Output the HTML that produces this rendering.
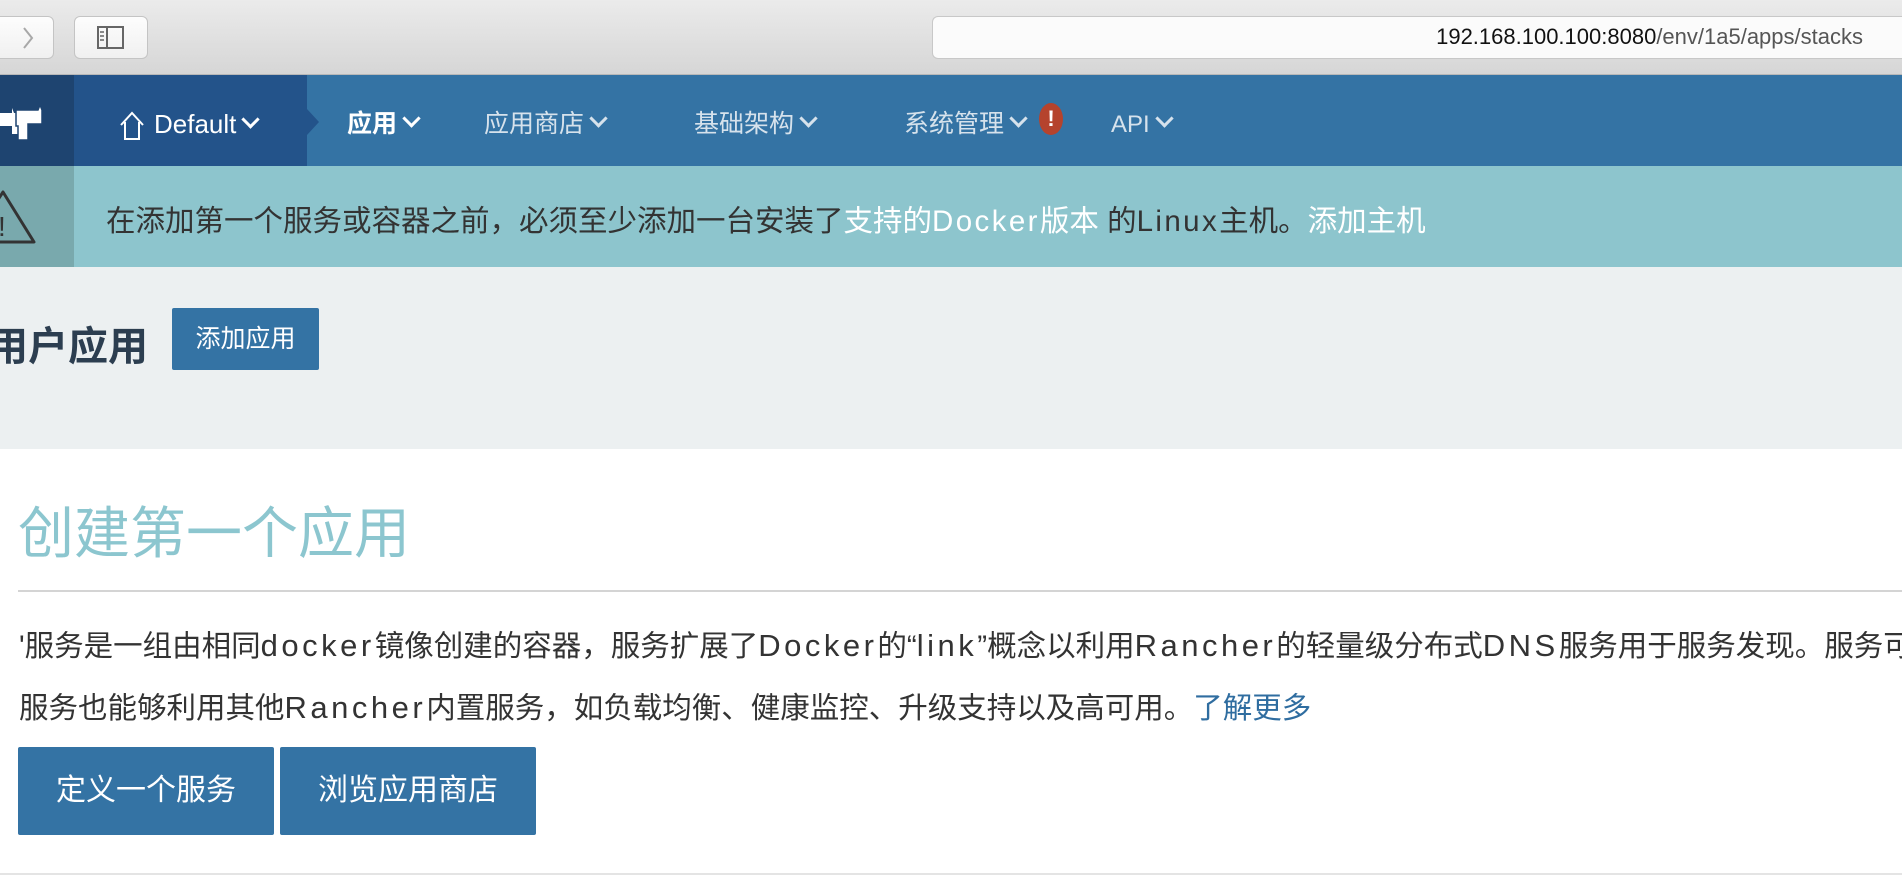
<!DOCTYPE html>
<html><head><meta charset="utf-8"><style>
*{margin:0;padding:0;box-sizing:border-box}
body{width:1902px;height:876px;overflow:hidden;background:#fff;font-family:"Liberation Sans","Noto Sans CJK SC",sans-serif;position:relative}
.abs{position:absolute}
#chrome{left:0;top:0;width:1902px;height:75px;background:linear-gradient(#ebebeb,#d6d6d6);border-bottom:1px solid #b8b8b8}
.btn{background:linear-gradient(#fdfdfd,#f0f0f0);border:1px solid #c4c4c4;border-radius:6px}
#nav{left:0;top:75px;width:1902px;height:91px;background:#3473a4}
.ni{top:79px;height:91px;line-height:91px;color:#d6e2ec;font-size:25px;white-space:nowrap}
.chev{display:inline-block;width:13px;height:13px;border-right:3px solid currentColor;border-bottom:3px solid currentColor;transform:rotate(45deg);margin-left:8px;position:relative;top:-7px}
#banner{left:0;top:166px;width:1902px;height:101px;background:#8dc5cd}
#gray{left:0;top:267px;width:1902px;height:182px;background:#ecf0f1}
.pb{background:#3473a4;color:#fff;text-align:center;border-radius:2px}
.l{letter-spacing:2.4px}
.p{font-size:29.5px;color:#333;white-space:nowrap}
.m{font-size:31px;letter-spacing:3.5px}
#clip{left:0;top:600px;width:1902px;height:140px;overflow:hidden}
</style></head><body>
<div id="chrome" class="abs">
 <div class="abs btn" style="left:-8px;top:16px;width:62px;height:43px"></div>
 <svg class="abs" style="left:21px;top:26px" width="14" height="24"><path d="M3 2 L11 12 L3 22" stroke="#a8a8a8" stroke-width="2" fill="none"/></svg>
 <div class="abs btn" style="left:74px;top:16px;width:74px;height:43px"></div>
 <svg class="abs" style="left:97px;top:26px" width="28" height="24"><rect x="1" y="1" width="25" height="21" fill="none" stroke="#666" stroke-width="2"/><line x1="10" y1="1" x2="10" y2="22" stroke="#666" stroke-width="2"/><line x1="3" y1="6" x2="7" y2="6" stroke="#666" stroke-width="1.5"/><line x1="3" y1="10" x2="7" y2="10" stroke="#666" stroke-width="1.5"/><line x1="3" y1="14" x2="7" y2="14" stroke="#666" stroke-width="1.5"/></svg>
 <div class="abs" style="left:932px;top:16px;width:970px;height:43px;background:#fbfbfb;border:1px solid #c8c8c8;border-right:none;border-radius:6px 0 0 6px"></div>
 <div class="abs" style="right:39px;top:24px;font-size:22px;color:#111;white-space:nowrap">192.168.100.100:8080<span style="color:#555">/env/1a5/apps/stacks</span></div>
</div>
<div id="nav" class="abs"></div>
<div class="abs" style="left:0;top:75px;width:74px;height:91px;background:#1e4470"></div>
<svg class="abs" style="left:0;top:104px" width="46" height="38"><path d="M0 9 H12 V4 L14 9 H20 V30 H12 V22 H0 Z" fill="#fff"/><path d="M16 6 H38 L40 1 L42 6 V20 H28 V36 H18 V22 H16 Z" fill="#fff" stroke="#1e4470" stroke-width="1.5"/></svg>
<div class="abs" style="left:74px;top:75px;width:233px;height:91px;background:#23538a"></div>
<svg class="abs" style="left:307px;top:109px" width="12" height="26"><path d="M0 0 L12 13 L0 26 Z" fill="#23538a"/></svg>
<svg class="abs" style="left:119px;top:111px" width="26" height="30"><path d="M2 14 L13 2 L24 14 M6 11 V28 H20 V11" stroke="#fff" stroke-width="2" fill="none"/></svg>
<div class="abs ni" style="left:154px;color:#fff;font-size:26px">Default<span class="chev"></span></div>
<div class="abs ni" style="left:347px;color:#fff;font-weight:bold">应用<span class="chev"></span></div>
<div class="abs ni" style="left:484px">应用商店<span class="chev"></span></div>
<div class="abs ni" style="left:694px">基础架构<span class="chev"></span></div>
<div class="abs ni" style="left:904px">系统管理<span class="chev"></span></div>
<div class="abs" style="left:1039px;top:103px;width:24px;height:32px;border-radius:50%;background:#b5432d;color:#fff;font-size:22px;line-height:32px;text-align:center;font-weight:bold">!</div>
<div class="abs ni" style="left:1111px;font-size:24px">API<span class="chev"></span></div>
<div id="banner" class="abs"></div>
<div class="abs" style="left:0;top:166px;width:74px;height:101px;background:#79a9ad"></div>
<svg class="abs" style="left:0;top:186px" width="40" height="64"><path d="M3 6 L34 56 H-30 Z" fill="none" stroke="#333" stroke-width="3" stroke-linejoin="round"/><text x="-2" y="50" font-size="28" fill="#333" font-family="Liberation Sans">!</text></svg>
<div class="abs" style="left:106px;top:198px;font-size:29.5px;color:#333;white-space:nowrap">在添加第一个服务或容器之前，必须至少添加一台安装了<span style="color:#fff">支持的<span class="l">Docker</span>版本</span> 的<span class="l">Linux</span>主机。<span style="color:#fff">添加主机</span></div>
<div id="gray" class="abs"></div>
<div class="abs" style="left:-12px;top:314px;font-size:40px;font-weight:bold;color:#2c3e50;white-space:nowrap">用户应用</div>
<div class="abs pb" style="left:172px;top:308px;width:147px;height:62px;line-height:62px;font-size:25px">添加应用</div>
<div class="abs" style="left:18px;top:489px;font-size:56px;color:#8cc6cf;white-space:nowrap">创建第一个应用</div>
<div class="abs" style="left:18px;top:590px;width:1884px;height:2px;background:#d4d4d4"></div>
<div id="clip" class="abs">
<div class="abs p" style="left:19px;top:23px">'服务是一组由相同<span class="m">docker</span>镜像创建的容器，服务扩展了<span class="m">Docker</span>的“<span class="m">link</span>”概念以利用<span class="m">Rancher</span>的轻量级分布式<span class="m">DNS</span>服务用于服务发现。服务可</div>
<div class="abs p" style="left:19px;top:85px">服务也能够利用其他<span class="m">Rancher</span>内置服务，如负载均衡、健康监控、升级支持以及高可用。<span style="color:#2f6da0">了解更多</span></div>
</div>
<div class="abs pb" style="left:18px;top:747px;width:256px;height:88px;line-height:88px;font-size:30px">定义一个服务</div>
<div class="abs pb" style="left:280px;top:747px;width:256px;height:88px;line-height:88px;font-size:30px">浏览应用商店</div>
<div class="abs" style="left:0;top:873px;width:1902px;height:2px;background:#e4e4e4"></div>
</body></html>
